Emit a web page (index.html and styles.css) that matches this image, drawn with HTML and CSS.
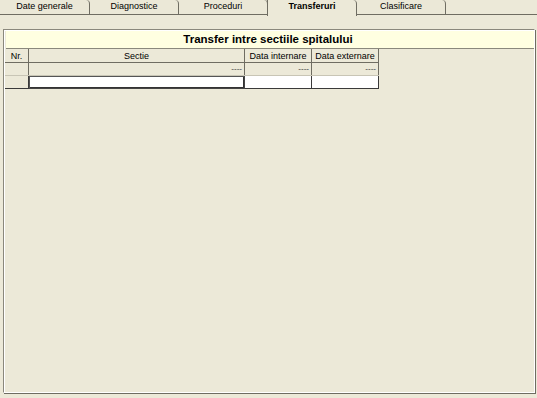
FILE: index.html
```html
<!DOCTYPE html>
<html lang="en">

<head>
  <meta charset="UTF-8">
  <title>Transferuri</title>
  <link rel="stylesheet" href="styles.css">
</head>

<body>
  <div class="tabs">
    <div class="tab">Date generale</div>
    <div class="tab">Diagnostice</div>
    <div class="tab">Proceduri</div>
    <div class="tab active">Transferuri</div>
    <div class="tab">Clasificare</div>
    <div class="tab-rest"></div>
  </div>

  <div class="panel">
    <div class="title">Transfer intre sectiile spitalului</div>
    <table class="grid">
      <tr>
        <th class="col-nr">Nr.</th>
        <th class="col-sectie">Sectie</th>
        <th class="col-data">Data internare</th>
        <th class="col-data">Data externare</th>
      </tr>
      <tr class="row-empty">
        <td></td>
        <td>----</td>
        <td>----</td>
        <td>----</td>
      </tr>
      <tr class="row-new">
        <td class="nr"></td>
        <td class="focus"></td>
        <td></td>
        <td></td>
      </tr>
    </table>
  </div>
</body>

</html>
```

FILE: styles.css
```css
html,
body {
  margin: 0;
  height: 398px;
  width: 537px;
  overflow: hidden;
  background: #ece9d8;
  font-family: 'Liberation Sans', Arial, sans-serif;
  font-size: 9px;
  color: #000;
}

.tabs {
  display: flex;
  height: 15px;
}

.tab {
  width: 89px;
  box-sizing: border-box;
  height: 15px;
  border-right: 1px solid #6f6d62;
  border-bottom: 1px solid #6f6d62;
  border-top-right-radius: 4px;
  text-align: center;
  line-height: 13px;
  background: #ebe8d7;
}

.tab:first-child {
  width: 90px;
}

.tab.active {
  font-weight: bold;
  border-left: 1px solid #6f6d62;
  border-bottom: none;
  height: 16px;
  margin-left: -1px;
  width: 90px;
  background: #ece9d8;
}

.tab-rest {
  flex: 1;
  height: 15px;
  box-sizing: border-box;
  border-bottom: 1px solid #6f6d62;
}

.panel {
  margin: 14px 2px 4px 3px;
  height: 364px;
  border: 1px solid #8a887c;
  border-right-color: #fff;
  border-bottom-color: #fff;
  box-shadow: inset 1px 1px 0 #fff, 1px 1px 0 #6f6d62;
  box-sizing: border-box;
  padding-left: 1px;
}

.title {
  height: 17px;
  margin-left: 1px;
  border-top: 1px solid #fff;
  border-bottom: 1px solid #8a887c;
  background: #ffffe1;
  text-align: center;
  font-size: 11.5px;
  font-weight: bold;
  line-height: 17px;
  padding-right: 4px;
}

.grid {
  border-collapse: collapse;
  table-layout: fixed;
}

.grid th,
.grid td {
  padding: 0 2px;
  height: 12px;
  font-weight: normal;
  line-height: 12px;
  white-space: nowrap;
}

.grid th {
  height: 13px;
  text-align: center;
  border-right: 1px solid #6f6d62;
  border-bottom: 1px solid #6f6d62;
  border-left: 1px solid #fff;
}

.grid th:first-child {
  border-left: none;
}

.col-nr {
  width: 19px;
}

.col-sectie {
  width: 211px;
}

.col-data {
  width: 62px;
}

.row-empty td {
  text-align: right;
  color: #333;
  font-size: 8px;
  border-right: 1px solid #6f6d62;
  border-bottom: 1px solid #c8c5b5;
}

.row-new td {
  background: #fff;
  border-right: 1px solid #3a3a3a;
  border-bottom: 1px solid #3a3a3a;
  height: 12px;
}

.row-new td.nr {
  background: #ece9d8;
}

.row-new td.focus {
  box-shadow: inset 1px 1px 0 #555, inset -1px -1px 0 #333;
  border: 1px solid #444;
}
```
